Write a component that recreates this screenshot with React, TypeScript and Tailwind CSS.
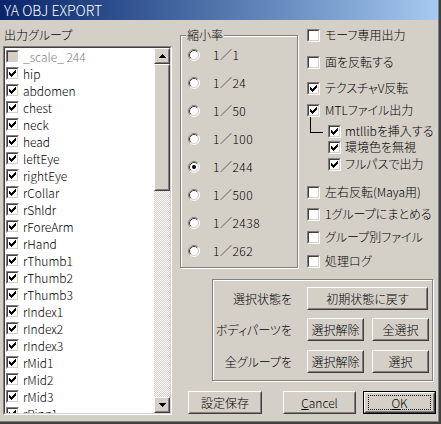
import type { ReactNode } from "react";

const groups = [
  "hip", "abdomen", "chest", "neck", "head", "leftEye", "rightEye", "rCollar", "rShldr",
  "rForeArm", "rHand", "rThumb1", "rThumb2", "rThumb3", "rIndex1", "rIndex2", "rIndex3",
  "rMid1", "rMid2", "rMid3", "rRing1",
];

const scales = ["1／1", "1／24", "1／50", "1／100", "1／244", "1／500", "1／2438", "1／262"];

const CHECK_PATH =
  "M6 0h1v1h-1z M5 1h2v1h-2z M0 2h1v1h-1z M4 2h3v1h-3z M0 3h2v1h-2z M3 3h3v1h-3z M0 4h5v1h-5z M1 5h3v1h-3z M2 6h1v1h-1z";

function Check({ checked, disabled }: { checked?: boolean; disabled?: boolean }) {
  return (
    <span className="flex h-[13px] w-[13px] shrink-0 border border-t-[#808080] border-l-[#808080] border-r-white border-b-white">
      <span
        className={
          "flex flex-1 items-center justify-center border border-t-[#404040] border-l-[#404040] border-r-[#d4d0c8] border-b-[#d4d0c8] " +
          (disabled ? "bg-[#d4d0c8]" : "bg-white")
        }
      >
        {checked && (
          <svg width="7" height="7" viewBox="0 0 7 7" shapeRendering="crispEdges">
            <path d={CHECK_PATH} fill="#000" />
          </svg>
        )}
      </span>
    </span>
  );
}

function Radio({ checked }: { checked?: boolean }) {
  return (
    <svg width="12" height="12" viewBox="0 0 12 12" className="shrink-0">
      <circle cx="6" cy="6" r="5" fill="#fff" />
      <path d="M2.11 9.89 A5.5 5.5 0 0 1 9.89 2.11" stroke="#808080" fill="none" />
      <path d="M9.89 2.11 A5.5 5.5 0 0 1 2.11 9.89" stroke="#fff" fill="none" />
      <path d="M2.82 9.18 A4.5 4.5 0 0 1 9.18 2.82" stroke="#404040" fill="none" />
      <path d="M9.18 2.82 A4.5 4.5 0 0 1 2.82 9.18" stroke="#d4d0c8" fill="none" />
      {checked && <circle cx="6" cy="6" r="2" fill="#000" />}
    </svg>
  );
}

function Raised({ className, children }: { className?: string; children?: ReactNode }) {
  return (
    <div className={"flex shrink-0 border border-t-white border-l-white border-r-[#404040] border-b-[#404040] bg-[#d4d0c8] " + (className ?? "")}>
      <div className="flex flex-1 items-center justify-center border border-t-[#d4d0c8] border-l-[#d4d0c8] border-r-[#808080] border-b-[#808080]">
        {children}
      </div>
    </div>
  );
}

function Arrow({ up }: { up?: boolean }) {
  return (
    <svg width="7" height="4" viewBox="0 0 7 4" shapeRendering="crispEdges">
      <path d={up ? "M3 0h1v1h-1z M2 1h3v1h-3z M1 2h5v1h-5z M0 3h7v1h-7z" : "M0 0h7v1h-7z M1 1h5v1h-5z M2 2h3v1h-3z M3 3h1v1h-1z"} fill="#000" />
    </svg>
  );
}

function RightCheck({ label, checked, className }: { label: string; checked?: boolean; className: string }) {
  return (
    <div className={"flex h-[16px] items-center gap-[5px] whitespace-nowrap " + className}>
      <Check checked={checked} />
      <span>{label}</span>
    </div>
  );
}

export default function App() {
  return (
    <div className="h-[424px] w-[441px] overflow-hidden border-r-2 border-b-2 border-[#404040] font-['Noto_Sans_CJK_JP',sans-serif] text-[12px] leading-[14px] font-light text-black [font-feature-settings:'palt']">
      <div className="flex h-full flex-col border-r border-b border-[#808080] bg-[#d4d0c8]">
        {/* title bar */}
        <div className="flex h-[20px] shrink-0 items-center bg-linear-to-r from-[#0a246a] to-[#a6caf0] pl-[4px] text-[14px] text-white">
          YA OBJ EXPORT
        </div>

        <div className="flex flex-1">
          {/* left column */}
          <div className="ml-[3px] flex w-[169px] shrink-0 flex-col">
            <div className="flex h-[26px] items-center pt-[4px] pl-[1px]">出力グループ</div>
            <div className="flex h-[369px] border border-t-[#808080] border-l-[#808080] border-r-white border-b-white">
              <div className="flex flex-1 overflow-hidden border border-t-[#404040] border-l-[#404040] border-r-[#d4d0c8] border-b-[#d4d0c8]">
                <div className="flex flex-1 flex-col overflow-hidden bg-white">
                  <div className="flex h-[17px] shrink-0 items-center gap-[4px] pl-[1px] text-[#808080]">
                    <Check disabled />
                    <span>_scale_ 244</span>
                  </div>
                  {groups.map((g) => (
                    <div key={g} className="flex h-[17px] shrink-0 items-center gap-[4px] pl-[1px]">
                      <Check checked />
                      <span>{g}</span>
                    </div>
                  ))}
                </div>
                <div className="flex w-[16px] shrink-0 flex-col">
                  <Raised className="h-[16px]">
                    <Arrow up />
                  </Raised>
                  <Raised className="h-[127px]" />
                  <div className="flex-1 bg-[repeating-conic-gradient(#ffffff_0%_25%,#d4d0c8_0%_50%)] bg-[length:2px_2px]" />
                  <Raised className="h-[16px]">
                    <Arrow />
                  </Raised>
                </div>
              </div>
            </div>
          </div>

          {/* right area */}
          <div className="flex flex-1 flex-col">
            <div className="flex h-[259px] shrink-0">
              <div className="relative mt-[15px] ml-[8px] h-[233px] w-[118px] shrink-0 border border-[#808080] shadow-[1px_1px_0_#ffffff,inset_1px_1px_0_#ffffff]">
                <span className="absolute -top-[8px] left-[5px] bg-[#d4d0c8] px-[1px]">縮小率</span>
                <div className="flex flex-col pt-[5px]">
                  {scales.map((s, i) => (
                    <div key={s} className="flex h-[28px] items-center pl-[7px]">
                      <Radio checked={i === 4} />
                      <span className="ml-[13px] tracking-[0.5px] [font-feature-settings:normal]">{s}</span>
                    </div>
                  ))}
                </div>
              </div>

              <div className="ml-[9px] flex flex-col">
                <RightCheck label="モーフ専用出力" className="mt-[7px]" />
                <RightCheck label="面を反転する" className="mt-[11px]" />
                <RightCheck label="テクスチャV反転" checked className="mt-[10px]" />
                <RightCheck label="MTLファイル出力" checked className="mt-[6px]" />
                <div className="mt-[5px] flex h-[16px] items-center whitespace-nowrap">
                  <span className="-mt-[6px] ml-[3px] h-[16px] w-[13px] self-start border-b border-l border-black" />
                  <span className="ml-[5px] flex items-center gap-[4px]">
                    <Check checked />
                    <span>mtllibを挿入する</span>
                  </span>
                </div>
                <div className="flex h-[16px] items-center gap-[4px] pl-[21px] whitespace-nowrap">
                  <Check checked />
                  <span>環境色を無視</span>
                </div>
                <div className="mt-[1px] flex h-[16px] items-center gap-[4px] pl-[21px] whitespace-nowrap">
                  <Check checked />
                  <span>フルパスで出力</span>
                </div>
                <RightCheck label="左右反転(Maya用)" className="mt-[12px]" />
                <RightCheck label="1グループにまとめる" className="mt-[6px]" />
                <RightCheck label="グループ別ファイル" className="mt-[7px]" />
                <RightCheck label="処理ログ" className="mt-[8px]" />
              </div>
            </div>

            {/* bottom group */}
            <div className="ml-[40px] flex h-[102px] w-[221px] shrink-0 flex-col border border-[#808080] pt-[7px] shadow-[1px_1px_0_#ffffff,inset_1px_1px_0_#ffffff]">
              <div className="flex h-[23px] items-center">
                <span className="flex w-[79px] justify-end whitespace-nowrap">選択状態を</span>
                <Raised className="ml-[15px] h-[23px] w-[121px]">初期状態に戻す</Raised>
              </div>
              <div className="mt-[8px] flex h-[23px] items-center">
                <span className="flex w-[79px] justify-end whitespace-nowrap">ボディパーツを</span>
                <Raised className="ml-[15px] h-[23px] w-[57px]">選択解除</Raised>
                <Raised className="ml-[8px] h-[23px] w-[57px]">全選択</Raised>
              </div>
              <div className="mt-[9px] flex h-[23px] items-center">
                <span className="flex w-[79px] justify-end whitespace-nowrap">全グループを</span>
                <Raised className="ml-[15px] h-[23px] w-[57px]">選択解除</Raised>
                <Raised className="ml-[8px] h-[23px] w-[57px]">選択</Raised>
              </div>
            </div>

            {/* dialog buttons */}
            <div className="mt-[10px] flex h-[23px]">
              <Raised className="ml-[16px] h-[23px] w-[74px]">設定保存</Raised>
              <Raised className="ml-[21px] h-[23px] w-[73px]">
                <span>
                  <span className="underline">C</span>ancel
                </span>
              </Raised>
              <div className="ml-[7px] flex h-[23px] w-[73px] border border-black">
                <Raised className="flex-1">
                  <span className="flex h-[15px] w-[63px] items-center justify-center border border-dotted border-black">
                    <span>
                      <span className="underline">O</span>K
                    </span>
                  </span>
                </Raised>
              </div>
            </div>
          </div>
        </div>
      </div>
    </div>
  );
}
